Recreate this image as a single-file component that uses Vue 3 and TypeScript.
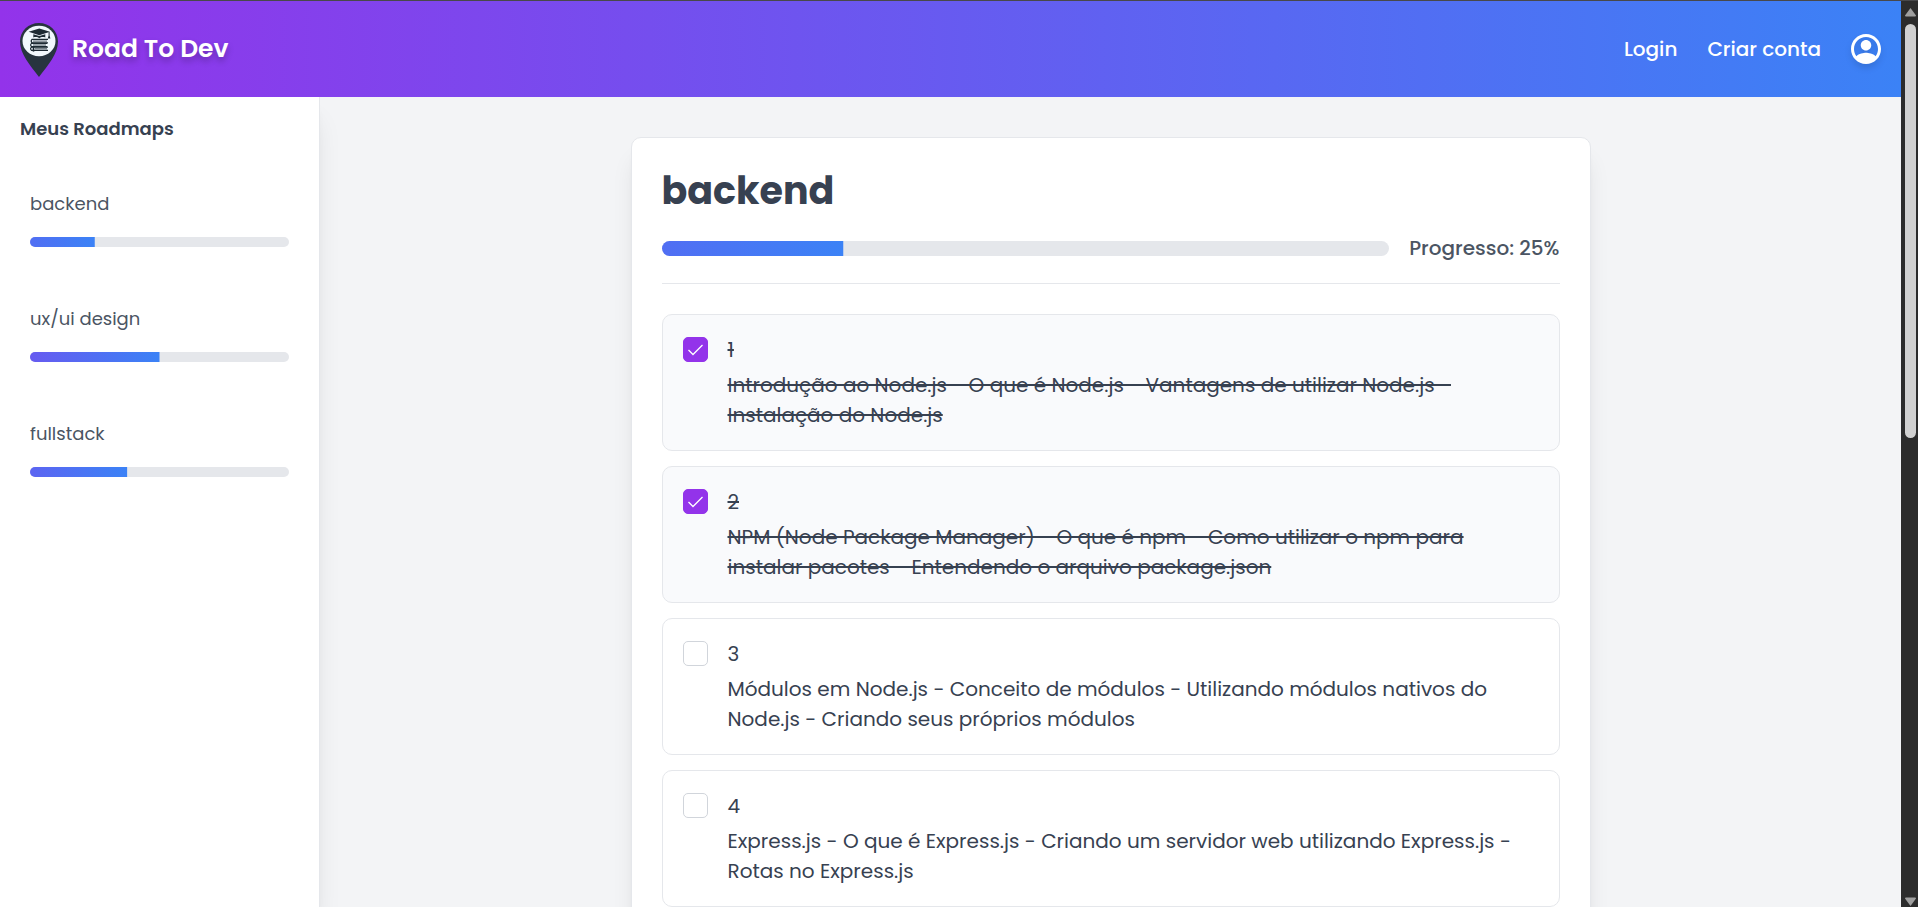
<script setup lang="ts">
import { reactive, ref } from 'vue'

interface Roadmap {
  name: string
  progress: number
}

interface Step {
  id: number
  text: string
  done: boolean
}

const roadmaps = ref<Roadmap[]>([
  { name: 'backend', progress: 25 },
  { name: 'ux/ui design', progress: 50 },
  { name: 'fullstack', progress: 37.5 },
])

const current = ref<Roadmap>(roadmaps.value[0])

const steps = reactive<Step[]>([
  {
    id: 1,
    text: 'Introdução ao Node.js - O que é Node.js - Vantagens de utilizar Node.js - Instalação do Node.js',
    done: true,
  },
  {
    id: 2,
    text: 'NPM (Node Package Manager) - O que é npm - Como utilizar o npm para instalar pacotes - Entendendo o arquivo package.json',
    done: true,
  },
  {
    id: 3,
    text: 'Módulos em Node.js - Conceito de módulos - Utilizando módulos nativos do Node.js - Criando seus próprios módulos',
    done: false,
  },
  {
    id: 4,
    text: 'Express.js - O que é Express.js - Criando um servidor web utilizando Express.js - Rotas no Express.js',
    done: false,
  },
])

const shift = (progress: number) => ({ transform: `translateX(${progress - 100}%)` })
</script>

<template>
  <div class="window">
    <div class="page">
      <header class="topbar">
        <a class="brand" href="#">
          <svg class="pin" viewBox="0 -2 38 56" aria-hidden="true">
            <path d="M19 0C8.500 0 0 8 0 18.500C0 31 10 42 19 54C28 42 38 31 38 18.500C38 8 29.500 0 19 0Z" fill="#27343f" />
            <ellipse cx="19" cy="18" rx="16.500" ry="15.200" fill="#f1f8fd" />
            <g fill="#1d2a33">
              <path d="M19.300 5.600L30 8.800L19.300 12.200L8.600 8.800Z" />
              <path d="M13.300 11.200L19.300 13L25.300 11.200V14.400C23 13.600 20.600 14 19.300 15.200C18 14 15.600 13.600 13.300 14.400Z" />
              <path d="M28.600 9H29.600V12.500L30.400 15.600H27.800L28.600 12.500Z" />
            </g>
            <g fill="none" stroke="#1d2a33" stroke-width="1.200">
              <path d="M28 16.400H12Q10.400 18.100 12 19.800H28" />
              <path d="M27 20.400H11.500Q9.800 22 11.500 23.600H27" />
              <path d="M28 24.200H11.500Q9.600 25.800 11.500 27.400H28" />
              <path d="M13 18.100H27M13 22H26M15 25.800H27" stroke-width="0.800" />
              <path d="M13.500 24V28.600" stroke-width="1.600" />
            </g>
          </svg>
          <span class="brand-name">Road To Dev</span>
        </a>
        <nav class="links">
          <a href="#">Login</a>
          <a href="#">Criar conta</a>
          <button class="account" type="button" aria-label="Conta">
            <svg viewBox="2 2 20 20" aria-hidden="true">
              <path
                fill="currentColor"
                d="M12 2C6.480 2 2 6.480 2 12s4.480 10 10 10 10-4.480 10-10S17.520 2 12 2zM18.360 16.830C16.930 15.090 13.460 14.500 12 14.500s-4.930.590-6.360 2.330C4.620 15.490 4 13.820 4 12c0-4.410 3.590-8 8-8s8 3.590 8 8c0 1.820-.620 3.490-1.640 4.830zM12 6c-1.940 0-3.500 1.560-3.500 3.500S10.060 13 12 13s3.500-1.560 3.500-3.500S13.940 6 12 6z"
              />
            </svg>
          </button>
        </nav>
      </header>

      <div class="body">
        <aside class="sidebar">
          <h2>Meus Roadmaps</h2>
          <a v-for="map in roadmaps" :key="map.name" class="roadmap" href="#" @click.prevent="current = map">
            <span>{{ map.name }}</span>
            <span class="track small"><span class="fill" :style="shift(map.progress)"></span></span>
          </a>
        </aside>

        <main class="content">
          <section class="card">
            <h1>{{ current.name }}</h1>
            <div class="progress">
              <div class="track"><div class="fill" :style="shift(current.progress)"></div></div>
              <span>Progresso: {{ current.progress }}%</span>
            </div>
            <ul class="steps">
              <li v-for="step in steps" :key="step.id">
                <label class="step" :class="{ done: step.done }">
                  <span class="box">
                    <input v-model="step.done" type="checkbox" />
                    <svg v-if="step.done" viewBox="0 0 15 15" aria-hidden="true">
                      <path d="M0.500 8L5 12.500L14.500 3" fill="none" stroke="#fff" stroke-width="1.300" />
                    </svg>
                  </span>
                  <span class="text">
                    <span>{{ step.id }}</span>
                    <span>{{ step.text }}</span>
                  </span>
                </label>
              </li>
            </ul>
          </section>
        </main>
      </div>
    </div>

    <div class="scrollbar" aria-hidden="true">
      <svg viewBox="0 0 13 10"><path d="M6.500 1L12 8.500Q12 9.500 11 9.500H2Q1 9.500 1 8.500Z" /></svg>
      <div class="rail"><div class="thumb"></div></div>
      <svg class="down" viewBox="0 0 13 10"><path d="M6.500 1L12 8.500Q12 9.500 11 9.500H2Q1 9.500 1 8.500Z" /></svg>
    </div>
  </div>
</template>

<style>
body {
  margin: 0;
  background: #f3f4f6;
}
</style>

<style scoped>
* {
  box-sizing: border-box;
}

.window {
  display: flex;
  height: 100vh;
  overflow: hidden;
  border-top: 1px solid #48484a;
  font-family: Poppins, Inter, sans-serif;
  font-size: 20px;
  line-height: 30px;
  color: #374151;
}

a {
  color: inherit;
  text-decoration: none;
}

.page {
  flex: 1;
  display: flex;
  flex-direction: column;
  min-width: 0;
}

.topbar {
  flex: none;
  display: flex;
  align-items: center;
  justify-content: space-between;
  height: 96px;
  padding: 0 20px;
  background: linear-gradient(to right, #9333ea, #3b82f6);
  color: #fff;
}

.brand {
  display: flex;
  align-items: center;
  gap: 14px;
}

.pin {
  width: 38px;
  height: 56px;
}

.brand-name {
  font-size: 25px;
  font-weight: 600;
  text-shadow: 0 4px 6px rgba(0, 0, 0, 0.25);
}

.links {
  display: flex;
  align-items: center;
  gap: 30px;
  font-weight: 500;
}

.account {
  display: flex;
  padding: 0;
  border: 0;
  background: none;
  color: #fff;
  filter: drop-shadow(0 4px 3px rgba(0, 0, 0, 0.12));
}

.account svg {
  width: 30px;
  height: 30px;
}

.body {
  flex: 1;
  display: flex;
  min-height: 0;
}

.sidebar {
  flex: none;
  width: 320px;
  padding: 17px 20px;
  background: #fff;
  border-right: 1px solid #e5e7eb;
  box-shadow: 0 20px 25px -5px rgba(0, 0, 0, 0.1), 0 8px 10px -6px rgba(0, 0, 0, 0.1);
  font-size: 18px;
  clip-path: inset(0 -30px 0 0);
}

.sidebar h2 {
  margin: 0 0 30px;
  font-size: 18px;
  font-weight: 600;
}

.roadmap {
  display: flex;
  flex-direction: column;
  gap: 18px;
  height: 85px;
  margin-bottom: 30px;
  padding: 15px 10px;
  color: #4b5563;
}

.track {
  display: block;
  flex: 1;
  height: 15px;
  border-radius: 8px;
  overflow: hidden;
  background: #e5e7eb;
}

.track.small {
  flex: none;
  height: 10px;
}

.fill {
  display: block;
  width: 100%;
  height: 100%;
  background: linear-gradient(to right, #9333ea, #3b82f6);
}

.content {
  flex: 1;
  min-width: 0;
  padding: 40px;
  overflow: hidden;
}

.card {
  max-width: 960px;
  margin: 0 auto;
  padding: 30px;
  background: #fff;
  border: 1px solid #e5e7eb;
  border-radius: 10px;
  box-shadow: 0 20px 25px -5px rgba(0, 0, 0, 0.1), 0 8px 10px -6px rgba(0, 0, 0, 0.1);
}

h1 {
  margin: 0 0 20px;
  font-size: 38px;
  line-height: 45px;
  font-weight: 700;
}

.progress {
  display: flex;
  align-items: center;
  gap: 20px;
  padding-bottom: 20px;
  border-bottom: 1px solid #e5e7eb;
  color: #4b5563;
  font-weight: 500;
}

.steps {
  display: flex;
  flex-direction: column;
  gap: 15px;
  margin: 30px 0 0;
  padding: 0;
  list-style: none;
}

.step {
  display: flex;
  gap: 20px;
  padding: 20px;
  border: 1px solid #e5e7eb;
  border-radius: 10px;
}

.step.done {
  background: #f9fafc;
  text-decoration: line-through 2px;
}

.box {
  flex: none;
  display: grid;
  place-items: center;
  width: 25px;
  height: 25px;
  margin-top: 2px;
}

.box > * {
  grid-area: 1 / 1;
}

.box input {
  appearance: none;
  width: 25px;
  height: 25px;
  margin: 0;
  border: 1px solid #d1d5db;
  border-radius: 5px;
  background: #fff;
}

.box input:checked {
  border-color: #9333ea;
  background: #9333ea;
}

.box svg {
  width: 15px;
  height: 15px;
  pointer-events: none;
}

.text {
  display: flex;
  flex-direction: column;
  gap: 5px;
}

.scrollbar {
  flex: none;
  display: flex;
  flex-direction: column;
  align-items: center;
  width: 17px;
  padding-top: 6px;
  padding-left: 2px;
  background: #2c2c2c;
}

.scrollbar svg {
  width: 13px;
  height: 10px;
  fill: #9f9f9f;
}

.scrollbar .down {
  transform: rotate(180deg);
}

.rail {
  flex: 1;
  padding-top: 7px;
}

.thumb {
  width: 11px;
  height: 47.4%;
  border-radius: 6px;
  background: #d1d1d1;
}
</style>
